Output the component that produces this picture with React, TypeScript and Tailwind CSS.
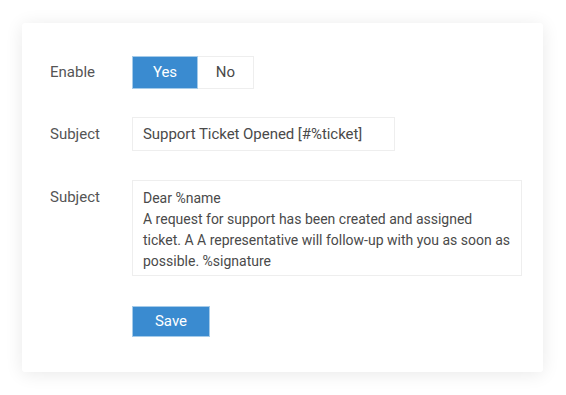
const FONT = { fontFamily: 'Roboto, "Liberation Sans", sans-serif' }

export default function App() {
  return (
    <div className="min-h-screen bg-white pt-[23px] pl-[22px]" style={FONT}>
      <div className="w-[521px] rounded-[3px] bg-white pl-[28px] pt-[33px] pb-[35px] shadow-[0_2px_18px_rgba(0,0,0,0.09)]">
        {/* Enable */}
        <div className="flex items-center">
          <div className="w-[82px] text-[15px] text-[#555]">Enable</div>
          <div className="flex h-[33px] text-[15px]">
            <button className="w-[66px] border border-[#a5cbe9] bg-[#3a8bd0] text-white">Yes</button>
            <button className="w-[56px] border border-l-0 border-[#eeeeee] bg-white text-[#4a4a4a]">No</button>
          </div>
        </div>

        {/* Subject line */}
        <div className="mt-[28px] flex items-center">
          <div className="w-[82px] text-[15px] text-[#555]">Subject</div>
          <div className="flex h-[34px] w-[263px] items-center border border-[#eeeeee] px-[10px] text-[15px] tracking-[-0.05px] text-[#4a4a4a]">
            Support Ticket Opened [#%ticket]
          </div>
        </div>

        {/* Body */}
        <div className="mt-[29px] flex items-start">
          <div className="w-[82px] pt-[7px] text-[15px] leading-[21px] text-[#555]">Subject</div>
          <div className="h-[96px] w-[390px] border border-[#eeeeee] px-[10px] pt-[7px] text-[14px] leading-[21px] text-[#4a4a4a]">
            <div>Dear %name</div>
            <div>
              A request for support has been created and assigned ticket. A A representative will follow-up with you as soon as
              possible. %signature
            </div>
          </div>
        </div>

        <div className="mt-[30px] pl-[82px]">
          <button className="h-[31px] w-[78px] border border-[#a5cbe9] bg-[#3a8bd0] text-[15px] text-white">Save</button>
        </div>
      </div>
    </div>
  )
}
